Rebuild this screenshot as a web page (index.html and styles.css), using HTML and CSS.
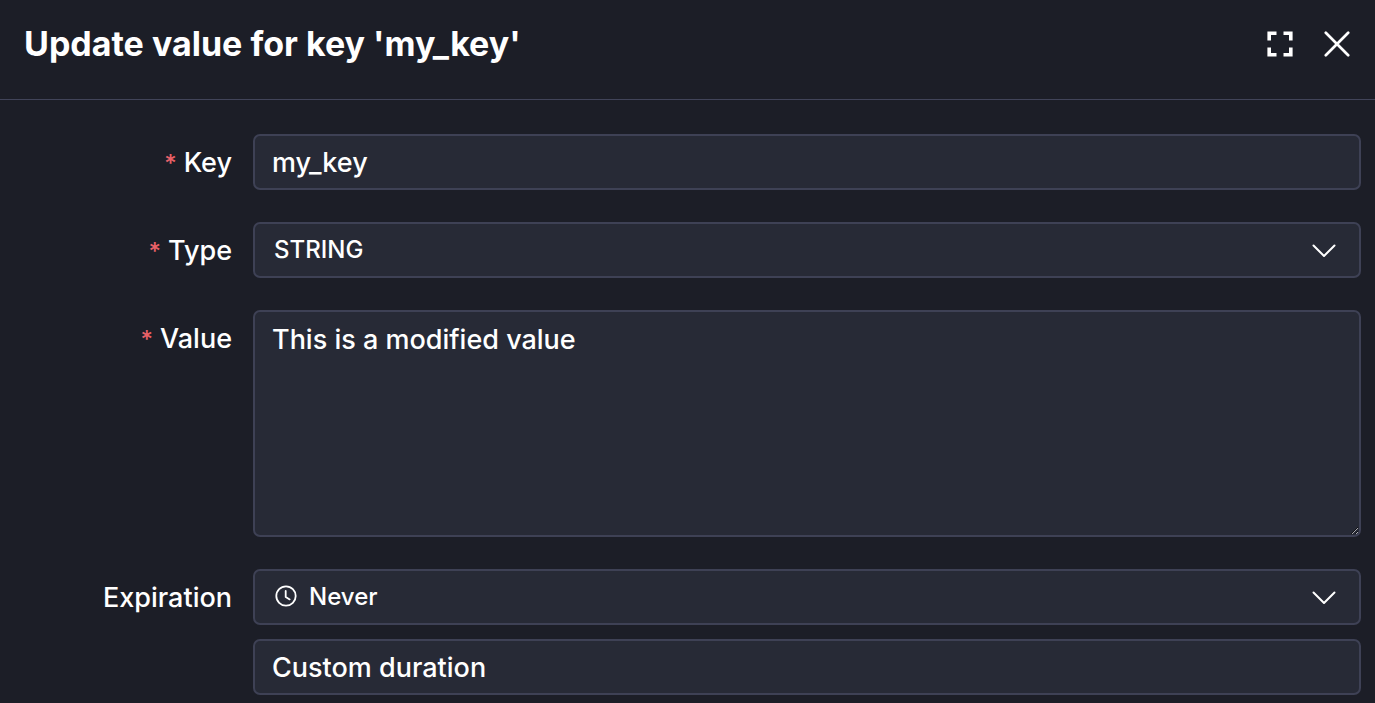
FILE: index.html
```html
<!DOCTYPE html>
<html lang="en">
<head>
<meta charset="utf-8">
<meta name="viewport" content="width=device-width, initial-scale=1">
<title>Update value for key 'my_key'</title>
<link rel="stylesheet" href="styles.css">
</head>
<body>
<header class="header">
  <h1 class="title">Update value for key 'my_key'</h1>
  <div class="actions">
    <button class="icon-button" type="button" aria-label="Full screen">
      <svg width="26" height="26" viewBox="0 0 26 26" fill="none" stroke="currentColor" stroke-width="3.6"><path d="M2.200 9.500V2.200h7.300M16.500 2.200h7.300v7.300M23.800 16.500v7.300h-7.300M9.500 23.800H2.200v-7.300"/></svg>
    </button>
    <button class="icon-button" type="button" aria-label="Close">
      <svg width="26" height="26" viewBox="0 0 26 26" fill="none" stroke="currentColor" stroke-width="2.7" stroke-linecap="round"><path d="M1.8 1.8l22.4 22.4M24.2 1.8L1.8 24.2"/></svg>
    </button>
  </div>
</header>
<form class="form">
  <div class="row">
    <label class="label required" for="key">Key</label>
    <input class="control" id="key" type="text" value="my_key" required>
  </div>
  <div class="row">
    <label class="label required" for="type">Type</label>
    <div class="select-wrap">
      <select class="control select" id="type" required><option>STRING</option></select>
      <svg class="chevron" width="24" height="14" viewBox="0 0 24 14" fill="none" stroke="currentColor" stroke-width="2" stroke-linecap="round" stroke-linejoin="round"><path d="M1.500 1.500L12 12 22.500 1.500"/></svg>
    </div>
  </div>
  <div class="row">
    <label class="label required" for="value">Value</label>
    <textarea class="control textarea" id="value" rows="6" required>This is a modified value</textarea>
  </div>
  <div class="row">
    <label class="label" for="expiration">Expiration</label>
    <div class="stack">
      <div class="select-wrap">
        <svg class="clock" width="22" height="22" viewBox="0 0 22 22" fill="none" stroke="currentColor" stroke-width="1.8" stroke-linecap="round" stroke-linejoin="round"><circle cx="11" cy="11" r="9.700"/><path d="M10.700 6v6l4 2.400"/></svg>
        <select class="control select with-icon" id="expiration"><option>Never</option></select>
        <svg class="chevron" width="24" height="14" viewBox="0 0 24 14" fill="none" stroke="currentColor" stroke-width="2" stroke-linecap="round" stroke-linejoin="round"><path d="M1.500 1.500L12 12 22.500 1.500"/></svg>
      </div>
      <input class="control" type="text" value="Custom duration" aria-label="Custom duration">
    </div>
  </div>
</form>
</body>
</html>
```

FILE: styles.css
```css
* {
  box-sizing: border-box;
}

body {
  margin: 0;
  background: #1c1e27;
  color: #fff;
  font-family: Inter, "Liberation Sans", sans-serif;
  font-size: 27px;
  font-weight: 500;
  line-height: 36px;
}

.header {
  display: flex;
  align-items: flex-start;
  justify-content: space-between;
  height: 100px;
  padding: 24px 25px 0 24px;
  border-bottom: 1px solid #414459;
}

.title {
  margin: 0;
  font-size: 34px;
  font-weight: 700;
  line-height: 40px;
}

.actions {
  display: flex;
  gap: 31px;
  padding-top: 7px;
}

.icon-button {
  display: flex;
  padding: 0;
  border: 0;
  background: none;
  color: inherit;
}

.form {
  display: flex;
  flex-direction: column;
  gap: 32px;
  padding: 34px 14px 8px 16px;
}

.row {
  display: grid;
  grid-template-columns: 216px 1fr;
  column-gap: 21px;
  align-items: start;
}

.label {
  padding-top: 11px;
  text-align: right;
}

.required::before {
  content: "*";
  margin-right: 7px;
  color: #e86167;
  font-size: 24px;
}

.control {
  display: block;
  width: 100%;
  height: 56px;
  margin: 0;
  padding: 8px 17px;
  border: 2px solid #3e4155;
  border-radius: 7px;
  outline: 0;
  background: #272a36;
  color: inherit;
  font: inherit;
}

.textarea {
  height: 227px;
  padding-top: 10px;
  resize: vertical;
}

.select-wrap {
  position: relative;
}

.select {
  appearance: none;
  padding: 0 60px 0 19px;
  font-size: 24px;
}

.with-icon {
  padding-left: 54px;
}

.chevron {
  position: absolute;
  top: 22px;
  right: 25px;
  pointer-events: none;
}

.clock {
  position: absolute;
  top: 16px;
  left: 22px;
  pointer-events: none;
}

.stack {
  display: grid;
  gap: 14px;
}
```
